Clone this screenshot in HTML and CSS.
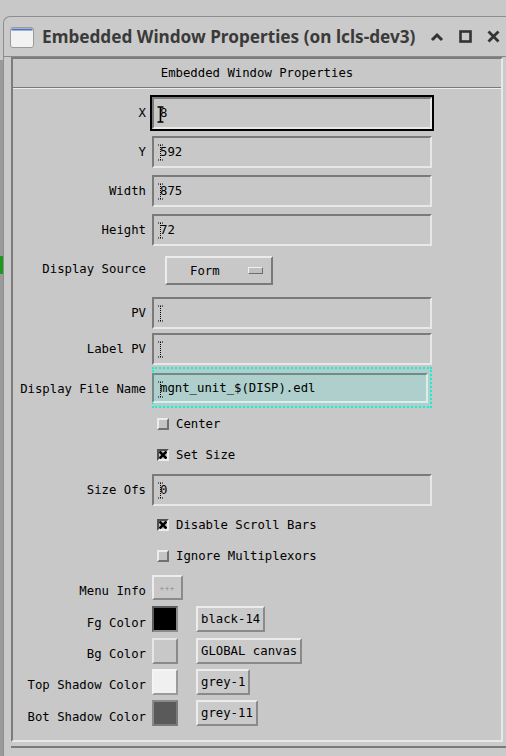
FILE: index.html
```html
<!DOCTYPE html>
<html>
<head>
<meta charset="utf-8">
<link rel="stylesheet" href="styles.css">
</head>
<body>
<div class="screen">
  <div class="desk-strip"></div>
  <div class="window">
    <div class="titlebar">
      <svg class="win-icon" width="24" height="21" viewBox="0 0 24 21">
        <rect x="0.5" y="0.5" width="23" height="20" rx="2.5" fill="#f2f2f2" stroke="#9a9a9a"/>
        <rect x="1.5" y="1.5" width="21" height="2" fill="#4f73b8"/>
      </svg>
      <span class="title">Embedded Window Properties (on lcls-dev3)</span>
      <div class="controls">
        <svg width="14" height="10" viewBox="0 0 14 10"><path d="M2 8 L7 3 L12 8" fill="none" stroke="#333" stroke-width="3"/></svg>
        <svg width="13" height="13" viewBox="0 0 13 13"><rect x="1.5" y="1.5" width="10" height="10" fill="none" stroke="#333" stroke-width="2.6"/></svg>
        <svg width="13" height="13" viewBox="0 0 13 13"><path d="M1.5 1.5 L11.5 11.5 M11.5 1.5 L1.5 11.5" fill="none" stroke="#333" stroke-width="2.8"/></svg>
      </div>
    </div>
    <div class="client">
      <div class="panel">
        <div class="header">Embedded Window Properties</div>
        <div class="form">
          <div class="row r39">
            <span class="label">X</span>
            <div class="field focus"><svg class="ibeam" width="7" height="17" viewBox="0 0 7 17"><path d="M0.5 1 H6.5 M3.5 1 V16 M0.5 16 H6.5" stroke="#000" stroke-width="1.6" fill="none"/></svg><span class="val">8</span></div>
          </div>
          <div class="row r39">
            <span class="label">Y</span>
            <div class="field"><svg class="ibeam" width="7" height="17" viewBox="0 0 7 17"><path d="M1 1 H6 M3.5 1 V16 M1 16 H6" stroke="#000" stroke-width="1" stroke-dasharray="1 1" fill="none"/></svg><span class="val">592</span></div>
          </div>
          <div class="row r39">
            <span class="label">Width</span>
            <div class="field"><svg class="ibeam" width="7" height="17" viewBox="0 0 7 17"><path d="M1 1 H6 M3.5 1 V16 M1 16 H6" stroke="#000" stroke-width="1" stroke-dasharray="1 1" fill="none"/></svg><span class="val">875</span></div>
          </div>
          <div class="row r39">
            <span class="label">Height</span>
            <div class="field"><svg class="ibeam" width="7" height="17" viewBox="0 0 7 17"><path d="M1 1 H6 M3.5 1 V16 M1 16 H6" stroke="#000" stroke-width="1" stroke-dasharray="1 1" fill="none"/></svg><span class="val">72</span></div>
          </div>
          <div class="row r45">
            <span class="label up">Display Source</span>
            <div class="option">
              <span class="option-text">Form</span>
              <span class="option-ind"></span>
            </div>
          </div>
          <div class="row r37">
            <span class="label">PV</span>
            <div class="field"><svg class="ibeam" width="7" height="17" viewBox="0 0 7 17"><path d="M1 1 H6 M3.5 1 V16 M1 16 H6" stroke="#000" stroke-width="1" stroke-dasharray="1 1" fill="none"/></svg><span class="val"></span></div>
          </div>
          <div class="row r36">
            <span class="label">Label PV</span>
            <div class="field"><svg class="ibeam" width="7" height="17" viewBox="0 0 7 17"><path d="M1 1 H6 M3.5 1 V16 M1 16 H6" stroke="#000" stroke-width="1" stroke-dasharray="1 1" fill="none"/></svg><span class="val"></span></div>
          </div>
          <div class="row r41">
            <span class="label down">Display File Name</span>
            <div class="dnd">
              <div class="field teal"><svg class="ibeam" width="7" height="17" viewBox="0 0 7 17"><path d="M1 1 H6 M3.5 1 V16 M1 16 H6" stroke="#000" stroke-width="1" stroke-dasharray="1 1" fill="none"/></svg><span class="val">mgnt_unit_$(DISP).edl</span></div>
            </div>
          </div>
          <div class="row r31">
            <span class="label"></span>
            <div class="check"><span class="box"></span><span>Center</span></div>
          </div>
          <div class="row r31">
            <span class="label"></span>
            <div class="check"><span class="box on"><svg width="8" height="8" viewBox="0 0 8 8"><path d="M0.5 0.5 L7.5 7.5 M7.5 0.5 L0.5 7.5" stroke="#000" stroke-width="2.6"/></svg></span><span>Set Size</span></div>
          </div>
          <div class="row r40">
            <span class="label">Size Ofs</span>
            <div class="field"><svg class="ibeam" width="7" height="17" viewBox="0 0 7 17"><path d="M1 1 H6 M3.5 1 V16 M1 16 H6" stroke="#000" stroke-width="1" stroke-dasharray="1 1" fill="none"/></svg><span class="val">0</span></div>
          </div>
          <div class="row r30">
            <span class="label"></span>
            <div class="check"><span class="box on"><svg width="8" height="8" viewBox="0 0 8 8"><path d="M0.5 0.5 L7.5 7.5 M7.5 0.5 L0.5 7.5" stroke="#000" stroke-width="2.6"/></svg></span><span>Disable Scroll Bars</span></div>
          </div>
          <div class="row r32">
            <span class="label"></span>
            <div class="check"><span class="box"></span><span>Ignore Multiplexors</span></div>
          </div>
          <div class="row r31">
            <span class="label low">Menu Info</span>
            <div class="menu-btn">+++</div>
          </div>
          <div class="row r32">
            <span class="label low">Fg Color</span>
            <span class="swatch fg"></span>
            <span class="cbtn">black-14</span>
          </div>
          <div class="row r31">
            <span class="label low">Bg Color</span>
            <span class="swatch bg"></span>
            <span class="cbtn">GLOBAL canvas</span>
          </div>
          <div class="row r31">
            <span class="label low">Top Shadow Color</span>
            <span class="swatch ts"></span>
            <span class="cbtn">grey-1</span>
          </div>
          <div class="row r32">
            <span class="label low">Bot Shadow Color</span>
            <span class="swatch bs"></span>
            <span class="cbtn">grey-11</span>
          </div>
        </div>
      </div>
      <div class="bottom-line"></div>
    </div>
  </div>
</div>
</body>
</html>
```

FILE: styles.css
```css
* { box-sizing: border-box; }
html, body { margin: 0; padding: 0; }
body {
  background: #c8c8c8;
  font-family: "DejaVu Sans Mono", "Liberation Mono", monospace;
  font-size: 12.3px;
  color: #000;
}
.screen {
  width: 506px;
  height: 756px;
  overflow: hidden;
  display: flex;
  background: #c8c8c8;
}
.desk-strip {
  width: 3px;
  flex: none;
  background: linear-gradient(to bottom, #c8c8c8 0, #c8c8c8 60px, #9a9a9a 60px, #9a9a9a 256px, #1c9a1c 256px, #1c9a1c 274px, #9a9a9a 274px);
}
.window {
  flex: 1;
  min-width: 0;
  margin-top: 16px;
  border-top: 1px solid #8e8e8e;
  border-left: 1px solid #8e8e8e;
  border-top-left-radius: 7px;
  background: #cacaca;
  display: flex;
  flex-direction: column;
}
.titlebar {
  height: 40px;
  flex: none;
  display: flex;
  align-items: center;
  padding-left: 6px;
  border-bottom: 1px solid #8a8a8a;
}
.win-icon { flex: none; margin-top: 1px; }
.title {
  margin-left: 8px;
  font-family: "Noto Sans", "DejaVu Sans", sans-serif;
  font-weight: bold;
  font-size: 17.2px;
  color: #3a3a3a;
  white-space: nowrap;
}
.controls {
  display: flex;
  align-items: center;
  margin-left: auto;
  gap: 15px;
  padding-right: 6px;
}
.client {
  flex: 1;
  padding-left: 7px;
  display: flex;
  flex-direction: column;
}
.panel {
  width: 492px;
  border-style: solid;
  border-width: 2px;
  border-color: #7c7c7c #e8e8e8 #e8e8e8 #7c7c7c;
  background: #c8c8c8;
}
.header {
  height: 29px;
  border-bottom: 1px solid #7a7a7a;
  box-shadow: 0 1px 0 #ececec;
  display: flex;
  align-items: center;
  justify-content: center;
}
.form {
  padding: 5px 0 11px 0;
  display: flex;
  flex-direction: column;
}
.row {
  display: flex;
  align-items: center;
}
.r30 { height: 30px; }
.r31 { height: 31px; }
.r32 { height: 32px; }
.r36 { height: 36px; }
.r37 { height: 37px; }
.r39 { height: 39px; }
.r40 { height: 40px; }
.r41 { height: 41px; }
.r45 { height: 45px; }
.label {
  width: 133px;
  flex: none;
  text-align: right;
  margin-right: 6px;
  white-space: nowrap;
}
.label.low { margin-top: 7px; }
.label.up { margin-top: -5px; }
.label.down { margin-top: 3px; }
.field {
  position: relative;
  width: 280px;
  height: 32px;
  border-style: solid;
  border-width: 2px;
  border-color: #7a7a7a #e8e8e8 #e8e8e8 #7a7a7a;
  display: flex;
  align-items: center;
  padding-left: 6px;
  white-space: nowrap;
}
.field.focus {
  outline: 2px solid #000;
}
.ibeam {
  position: absolute;
  left: 3px;
  top: 6px;
}
.field.focus .ibeam { top: 7px; }
.dnd {
  width: 280px;
  height: 41px;
  border: 2px dotted #22ecd0;
  background: #aecfcb;
  padding-top: 4px;
}
.dnd .field.teal {
  width: 276px;
  height: 30px;
  margin-left: -2px;
  background: #aecfcb;
  border-color: #6f8c89 #d6eeec #d6eeec #6f8c89;
}
.option {
  margin-left: 13px;
  width: 108px;
  height: 29px;
  border-style: solid;
  border-width: 2px;
  border-color: #ececec #7a7a7a #7a7a7a #ececec;
  display: flex;
  align-items: center;
  padding-left: 23px;
  margin-top: -2px;
}
.option-text { width: 58px; }
.option-ind {
  width: 15px;
  height: 7px;
  border-style: solid;
  border-width: 1px;
  border-color: #f0f0f0 #6c6c6c #6c6c6c #f0f0f0;
  background: #c0c0c0;
}
.check {
  display: flex;
  align-items: center;
  margin-left: 5px;
  gap: 7px;
}
.box {
  width: 12px;
  height: 12px;
  border-style: solid;
  border-width: 2px;
  border-color: #ececec #707070 #707070 #ececec;
  background: #c4c4c4;
  display: flex;
  align-items: center;
  justify-content: center;
}
.box.on {
  border-color: #505050 #ececec #ececec #505050;
  background: #c4c4c4;
}
.menu-btn {
  width: 31px;
  height: 25px;
  border-style: solid;
  border-width: 2px;
  border-color: #ececec #8a8a8a #8a8a8a #ececec;
  display: flex;
  align-items: center;
  justify-content: center;
  font-size: 7px;
  color: #8a8a8a;
  letter-spacing: 1px;
  padding-top: 2px;
}
.swatch {
  width: 26px;
  height: 26px;
  flex: none;
  border-style: solid;
  border-width: 2px;
  border-color: #7a7a7a #7a7a7a #7a7a7a #7a7a7a;
}
.swatch.fg { background: #000; border-color: #5c5c5c #8a8a8a #8a8a8a #5c5c5c; }
.swatch.bg { background: #c8c8c8; border-color: #e6e6e6 #8a8a8a #8a8a8a #e6e6e6; }
.swatch.ts { background: #f0f0f0; border-color: #f4f4f4 #9a9a9a #9a9a9a #f4f4f4; }
.swatch.bs { background: #5a5a5a; border-color: #8a8a8a #7a7a7a #7a7a7a #8a8a8a; }
.cbtn {
  margin-left: 18px;
  height: 26px;
  padding: 0 3px;
  border-style: solid;
  border-width: 2px;
  border-color: #ececec #8a8a8a #8a8a8a #ececec;
  display: flex;
  align-items: center;
  white-space: nowrap;
  background: #cacaca;
}
.bottom-line {
  margin-top: 4px;
  height: 2px;
  background: #7a7a7a;
}
```
